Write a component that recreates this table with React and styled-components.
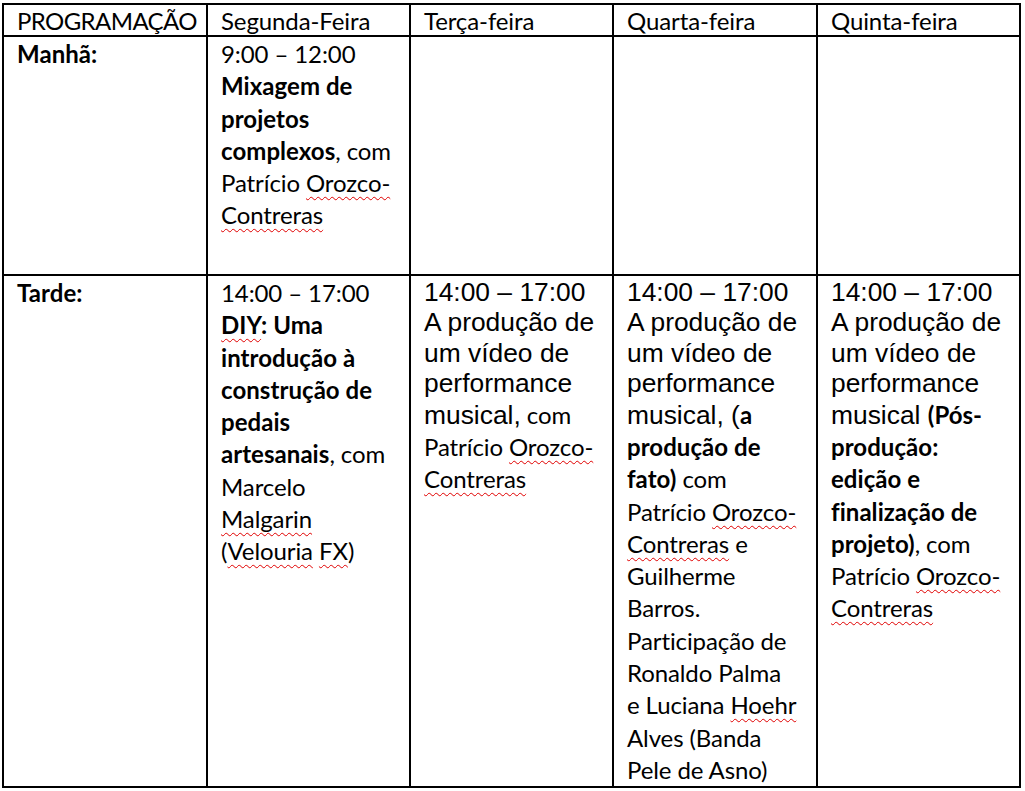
import React from "react";
import styled, { createGlobalStyle } from "styled-components";

const Global = createGlobalStyle`
  html, body { margin: 0; padding: 0; background: #fff; }
  #root { min-height: 791px; }
`;

const Page = styled.div`
  padding: 3px 0 0 2px;
`;

const Table = styled.div`
  display: grid;
  grid-template-columns: 202px 201px 201px 202px 201px;
  grid-template-rows: 30px 237px 510px;
  gap: 2px;
  padding: 2px;
  width: max-content;
  background: #000;
`;

const Cell = styled.div`
  background: #fff;
  padding: ${(p) => (p.$head ? "0" : "1px")} 2px 0 13px;
  font-family: Lato, "Noto Sans", sans-serif;
  font-size: 24px;
  letter-spacing: -0.1px;
  line-height: 32.3px;
  color: #000;
  white-space: nowrap;
  overflow: visible;
`;

const HeadText = styled.span`
  letter-spacing: ${(p) => (p.$tight ? "-0.6px" : "-0.1px")};
`;

const ArialText = styled.div`
  font-family: "Liberation Sans", Arial, sans-serif;
  font-size: 26.4px;
  letter-spacing: 0;
  line-height: 30.4px;
`;

const Cal = styled.span`
  font-family: Lato, "Noto Sans", sans-serif;
  font-size: 24px;
  letter-spacing: ${(p) => (p.$bold ? "0" : "-0.1px")};
  line-height: 32.3px;
  font-weight: ${(p) => (p.$bold ? 700 : 400)};
`;

const B = styled.b`
  font-weight: 700;
  letter-spacing: 0.05px;
`;

const Err = styled.span`
  text-decoration-line: underline;
  text-decoration-style: wavy;
  text-decoration-color: #e00000;
  text-decoration-thickness: 1px;
  text-underline-offset: 4px;
  text-decoration-skip-ink: none;
`;

export default function App() {
  return (
    <>
      <Global />
      <Page>
        <Table>
          <Cell $head>
            <HeadText $tight>PROGRAMAÇÃO</HeadText>
          </Cell>
          <Cell $head>
            <HeadText>Segunda-Feira</HeadText>
          </Cell>
          <Cell $head>
            <HeadText>Terça-feira</HeadText>
          </Cell>
          <Cell $head>
            <HeadText>Quarta-feira</HeadText>
          </Cell>
          <Cell $head>
            <HeadText>Quinta-feira</HeadText>
          </Cell>

          <Cell>
            <B>Manhã:</B>
          </Cell>
          <Cell>
            9:00 – 12:00
            <br />
            <B>Mixagem de</B>
            <br />
            <B>projetos</B>
            <br />
            <B>complexos</B>, com
            <br />
            Patrício <Err>Orozco-</Err>
            <br />
            <Err>Contreras</Err>
          </Cell>
          <Cell />
          <Cell />
          <Cell />

          <Cell>
            <B>Tarde:</B>
          </Cell>
          <Cell>
            14:00 – 17:00
            <br />
            <B>
              <Err>DIY</Err>: Uma
            </B>
            <br />
            <B>introdução à</B>
            <br />
            <B>construção de</B>
            <br />
            <B>pedais</B>
            <br />
            <B>artesanais</B>, com
            <br />
            Marcelo
            <br />
            <Err>Malgarin</Err>
            <br />
            (<Err>Velouria</Err> <Err>FX</Err>)
          </Cell>
          <Cell>
            <ArialText>
              14:00 – 17:00
              <br />
              A produção de
              <br />
              um vídeo de
              <br />
              performance
              <br />
              musical,<Cal> com</Cal>
              <br />
              <Cal>
                Patrício <Err>Orozco-</Err>
              </Cal>
              <br />
              <Cal>
                <Err>Contreras</Err>
              </Cal>
            </ArialText>
          </Cell>
          <Cell>
            <ArialText>
              14:00 – 17:00
              <br />
              A produção de
              <br />
              um vídeo de
              <br />
              performance
              <br />
              musical, (<Cal $bold>a</Cal>
            </ArialText>
            <B>produção de</B>
            <br />
            <B>fato)</B> com
            <br />
            Patrício <Err>Orozco-</Err>
            <br />
            <Err>Contreras</Err> e
            <br />
            Guilherme
            <br />
            Barros.
            <br />
            Participação de
            <br />
            Ronaldo Palma
            <br />
            e Luciana <Err>Hoehr</Err>
            <br />
            Alves (Banda
            <br />
            Pele de Asno)
          </Cell>
          <Cell>
            <ArialText>
              14:00 – 17:00
              <br />
              A produção de
              <br />
              um vídeo de
              <br />
              performance
              <br />
              musical <Cal $bold>(Pós-</Cal>
            </ArialText>
            <B>produção:</B>
            <br />
            <B>edição e</B>
            <br />
            <B>finalização de</B>
            <br />
            <B>projeto)</B>, com
            <br />
            Patrício <Err>Orozco-</Err>
            <br />
            <Err>Contreras</Err>
          </Cell>
        </Table>
      </Page>
    </>
  );
}
